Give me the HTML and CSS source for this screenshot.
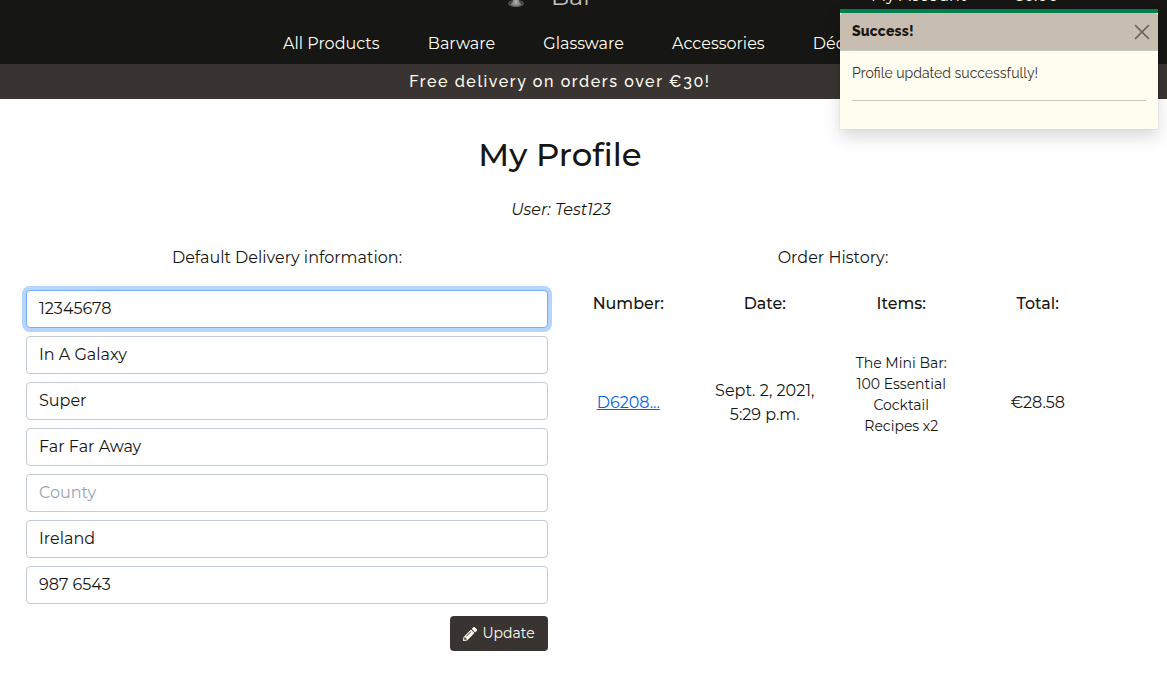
FILE: index.html
```html
<!DOCTYPE html>
<html lang="en">
<head>
<meta charset="utf-8">
<title>My Profile</title>
<link rel="stylesheet" href="styles.css">
</head>
<body>
<header class="header">
  <div class="topbar">
    <div class="brand">
      <svg class="brand-mark" width="18" height="9" viewBox="0 0 18 9"><ellipse cx="9" cy="3.500" rx="7.500" ry="3.100" fill="#3b3b39" stroke="#777773" stroke-width=".7"/><path d="M6 0h6v1.500l2.500 3q-5.500 3-11 0l2.500-3z" fill="#8a8a86"/><path d="M7.500 0h3v4h-3z" fill="#aaaaa6"/></svg>
      <span class="brand-name">Bar</span>
    </div>
    <div class="account"><span>My Account</span><span>€0.00</span></div>
  </div>
  <nav class="nav">
    <a>All Products</a><a>Barware</a><a>Glassware</a><a>Accessories</a><a>Décor</a>
  </nav>
</header>
<div class="banner">Free delivery on orders over €30!</div>
<main class="page">
  <h1 class="title">My Profile</h1>
  <p class="user">User: Test123</p>
  <div class="columns">
    <section class="delivery">
      <p class="heading">Default Delivery information:</p>
      <form class="form">
        <div class="field focused">12345678</div>
        <div class="field">In A Galaxy</div>
        <div class="field">Super</div>
        <div class="field">Far Far Away</div>
        <div class="field placeholder">County</div>
        <div class="field">Ireland</div>
        <div class="field">987 6543</div>
        <button class="update" type="button">
          <svg width="14" height="14" viewBox="0 0 512 512"><path fill="currentColor" d="M498 142l-46 46c-5 5-12 5-17 0L324 77c-5-5-5-12 0-17l46-46c19-19 49-19 68 0l60 60c19 19 19 49 0 68zM284 100L22 362 .4 484c-3 16 11 30 28 27l121-21 262-262c5-5 5-12 0-17L301 100c-5-5-13-5-17 0zM124 340c-5-5-5-14 0-19l154-154c5-5 14-5 19 0s5 14 0 19L143 340c-5 5-14 5-19 0zM88 424h48v36l-64 12-32-32 12-64h36v48z"/></svg>
          <span>Update</span>
        </button>
      </form>
    </section>
    <section class="history">
      <p class="heading">Order History:</p>
      <div class="row head"><span>Number:</span><span>Date:</span><span>Items:</span><span>Total:</span></div>
      <div class="row order">
        <a class="link">D6208...</a>
        <div>Sept. 2, 2021,<br>5:29 p.m.</div>
        <div class="items">The Mini Bar:<br>100 Essential<br>Cocktail<br>Recipes x2</div>
        <span>€28.58</span>
      </div>
    </section>
  </div>
</main>
<aside class="toast">
  <div class="toast-head"><strong>Success!</strong>
    <svg width="16" height="16" viewBox="0 0 16 16"><path d="M1.500 1.500l13 13M14.500 1.500l-13 13" stroke="#655f58" stroke-width="1.600" stroke-linecap="round"/></svg>
  </div>
  <div class="toast-body">Profile updated successfully!<hr></div>
</aside>
</body>
</html>
```
FILE: styles.css
```css
* { box-sizing: border-box; }
body { margin: 0; height: 682px; overflow: hidden; background: #fff; color: #161614; font: 16px/24px Montserrat, Inter, sans-serif; }
p, h1 { margin: 0; }
span, a { white-space: nowrap; }
.header { height: 64px; background: #161614; color: #fffdf0; overflow: hidden; }
.topbar { height: 32px; display: flex; }
.brand { display: flex; width: 850px; padding-left: 507px; gap: 26px; }
.brand-name { font: 24px/24px Montserrat, Inter, sans-serif; color: #c8c5bb; margin-top: -15px; height: 24px; }
.account { display: flex; gap: 45px; padding-left: 21px; margin-top: -16px; height: 24px; }
.nav { display: flex; gap: 48.2px; padding-left: 283px; }
.banner { height: 35px; background: #393431; color: #fffdf0; text-align: center; padding-right: 47px; font: 550 16px/35px Raleway, Lato, sans-serif; letter-spacing: 1.6px; }
.page { width: 1092px; margin-left: 14px; }
.title { font: 540 32.4px/40px Montserrat, Inter, sans-serif; text-align: center; padding-top: 36px; }
.user { text-align: center; font-style: italic; padding: 23px 0 0 2px; }
.columns { display: grid; grid-template-columns: 1fr 1fr; padding-top: 24px; }
.delivery { padding: 0 12px; }
.heading { text-align: center; }
.form { display: flex; flex-direction: column; gap: 8px; padding-top: 20px; }
.field { height: 38px; border: 1px solid #c3cad1; border-radius: 4px; padding: 6px 12px; background: #fff; }
.focused { border-color: #73adfb; box-shadow: 0 0 0 4px #b6d4fc; }
.placeholder { color: #95a5b3; }
.update { align-self: flex-end; width: 98px; height: 35px; margin-top: 4px; border: 0; border-radius: 4px; background: #393431; color: #fffdf0; display: flex; align-items: center; justify-content: center; gap: 5px; padding: 0; font: 450 14px/21px Montserrat, Inter, sans-serif; }
.row { display: grid; grid-template-columns: repeat(4, 1fr); text-align: center; align-items: center; }
.head { padding-top: 22px; font-weight: 550; font-size: 15.9px; }
.order { padding-top: 37px; }
.items { font-size: 14px; line-height: 21px; padding-bottom: 16px; }
.link { color: #0064eb; text-decoration: underline; }
.toast { position: absolute; left: 840px; top: 9px; width: 318px; height: 120px; border-top: 4px solid #00804f; background: #fffdf0; box-shadow: 0 8px 16px rgba(0,0,0,.15), 0 0 0 1px rgba(0,0,0,.03); font: 14px/21px Raleway, Lato, sans-serif; }
.toast-head { height: 38px; padding: 0 8px 0 12px; background: #c7bdb0; border-bottom: 1px solid #c8c8c4; border-radius: 3px 3px 0 0; display: flex; align-items: center; justify-content: space-between; }
.toast-head strong { font-weight: 800; letter-spacing: .2px; }
.toast-body { padding: 12px; color: #393431; }
.toast hr { margin: 16px 0; border: 0; border-top: 1px solid #c8c6bc; }
```
